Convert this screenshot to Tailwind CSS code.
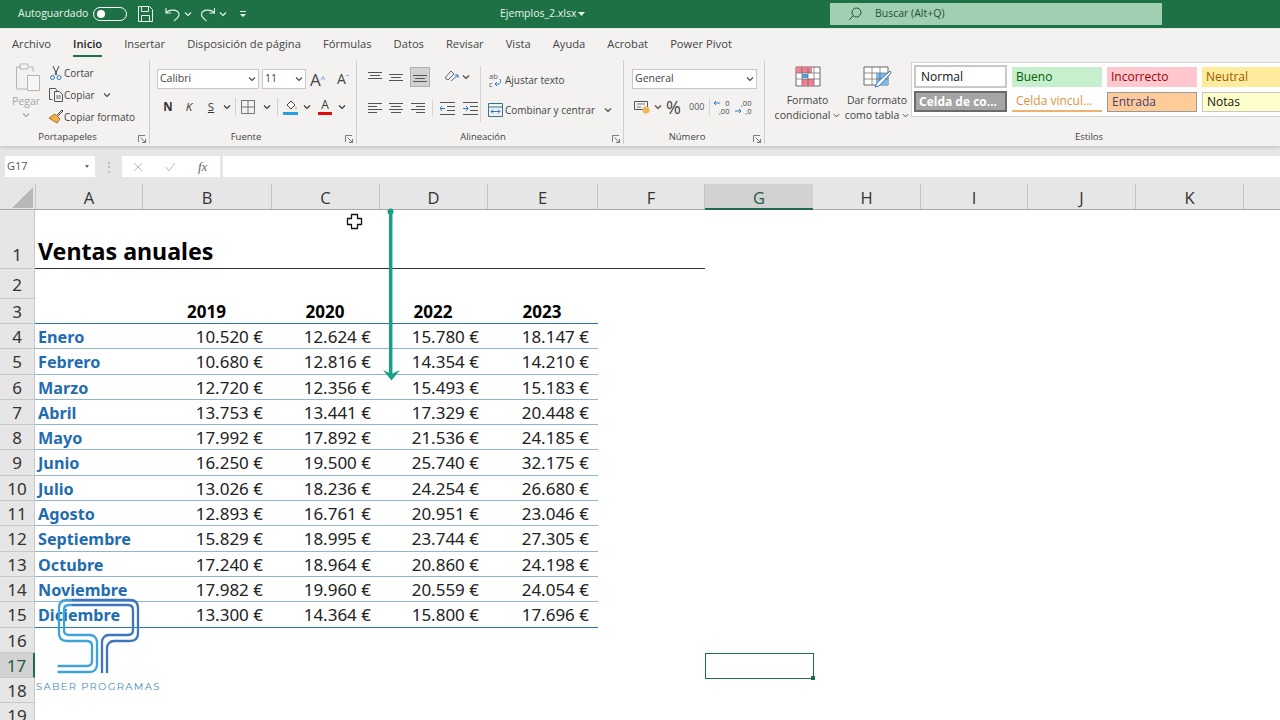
<!DOCTYPE html>
<html lang="es">
<head>
<meta charset="UTF-8">
<title>Ejemplos_2.xlsx - Excel</title>
<script src="https://cdn.jsdelivr.net/npm/@tailwindcss/browser@4"></script>
</head>
<body class="relative w-[1280px] h-[720px] overflow-hidden bg-white font-['Open_Sans',sans-serif] text-[#333]">

<svg class="hidden">
  <symbol id="chev" viewBox="0 0 8 8"><path d="M1 2.500l3 3 3-3" fill="none" stroke="currentColor" stroke-width="1.100"/></symbol>
  <symbol id="launch" viewBox="0 0 9 9"><path d="M.5 8V.5H8M8.500 8.500L3 3M8.500 4.500v4h-4" fill="none" stroke="#666" stroke-width="1"/></symbol>
</svg>

<!-- title bar -->
<header class="h-[29px] bg-[#1e7145] border-b border-[#dfe8e2] flex items-center text-[#e9f3ec] text-[10.500px]">
  <span class="ml-[18px] w-[75px]">Autoguardado</span>
  <span class="w-[34px] h-[14px] rounded-full border border-white flex items-center pl-[3px]"><span class="w-[8px] h-[8px] rounded-full bg-white"></span></span>
  <svg class="ml-[11px] w-[15px] h-[16px]" viewBox="0 0 15 16" fill="none" stroke="#e9f3ec" stroke-width="1"><path d="M.5.500h11l3 3v12H.5zM3.500.500v5h7v-5M3.500 15.500v-6h8v6"/></svg>
  <svg class="ml-[12px] w-[15px] h-[15px]" viewBox="0 0 15 15" fill="none" stroke="#e9f3ec" stroke-width="1.100"><path d="M1 1v5h5M1 6c3-4 12-4 13 1 .5 3-3 5-5 7"/></svg>
  <svg class="ml-[4px] w-[8px] h-[8px] text-[#e9f3ec]"><use href="#chev"/></svg>
  <svg class="ml-[8px] w-[16px] h-[15px]" viewBox="0 0 15 15" fill="none" stroke="#e9f3ec" stroke-width="1.100"><path d="M14 1v5H9M14 6C11 2 2 2 1 7c-.5 3 3 5 5 7"/></svg>
  <svg class="ml-[3px] w-[8px] h-[8px] text-[#e9f3ec]"><use href="#chev"/></svg>
  <svg class="ml-[12px] w-[8px] h-[8px]" viewBox="0 0 8 8" fill="#e9f3ec"><path d="M1 1h6v1H1zM1 4h6L4 7z"/></svg>
  <span class="ml-[253px] w-[78px] whitespace-nowrap">Ejemplos_2.xlsx</span>
  <svg class="w-[7px] h-[4px]" viewBox="0 0 7 4" fill="#e9f3ec"><path d="M0 0h7L3.500 4z"/></svg>
  <div class="ml-[245px] w-[332px] h-[22px] bg-[#a0cfb1] flex items-center text-[#1f4f36]">
    <svg class="ml-[18px] w-[14px] h-[14px]" viewBox="0 0 14 14" fill="none" stroke="#1f4f36" stroke-width="1"><circle cx="8.500" cy="5.500" r="4.500"/><path d="M5.500 8.500L1 13"/></svg>
    <span class="ml-[13px]">Buscar (Alt+Q)</span>
  </div>
</header>

<!-- tabs -->
<nav class="h-[29px] bg-[#f3f2f1] flex items-center gap-[22px] pl-[12px] pt-[2px] text-[11.200px] text-[#444]">
  <span>Archivo</span>
  <span class="relative font-semibold text-[#222]">Inicio<span class="absolute left-0 right-0 top-[19px] h-[2px] bg-[#1e7145]"></span></span>
  <span>Insertar</span><span>Disposición de página</span><span>Fórmulas</span><span>Datos</span><span>Revisar</span><span>Vista</span><span>Ayuda</span><span>Acrobat</span><span>Power Pivot</span>
</nav>

<!-- ribbon -->
<div class="h-[88px] bg-[#f3f2f1] flex text-[10px] text-[#444] shadow-[0_2px_3px_#c8c8c8] relative">

  <section class="w-[150px] flex flex-col border-r border-[#cfcfcf] my-[2px]">
    <div class="h-[70px] flex pt-[2px]">
      <div class="w-[48px] pl-[12px] flex flex-col text-[#a6a6a6] text-[10.500px]">
        <svg class="ml-[3px] w-[26px] h-[30px]" viewBox="0 0 26 30" fill="none" stroke="#b5b5b5"><path d="M6 5H1.500v22H12M18 10V5h-4M5 2h8v5H5z"/><path d="M12.500 13.500h12v15h-12z" fill="#f7f7f7"/></svg>
        <span class="mt-[2px]">Pegar</span>
        <svg class="ml-[10px] mt-[1px] w-[8px] h-[8px]"><use href="#chev"/></svg>
      </div>
      <div class="flex flex-col">
        <div class="h-[22px] flex items-center"><svg class="w-[16px] h-[16px]" viewBox="0 0 16 16" fill="none"><path d="M5 1l4 9M11 1L7 10" stroke="#444"/><circle cx="4.500" cy="12.500" r="2" stroke="#2b79c2"/><circle cx="11" cy="12.500" r="2" stroke="#2b79c2"/></svg><span>Cortar</span></div>
        <div class="h-[22px] flex items-center"><svg class="w-[16px] h-[16px]" viewBox="0 0 16 16" fill="none" stroke="#555"><path d="M4.500 12.500h-3V1.500h6l2 3M6.500 4.500h5l3 3v7h-8z"/><path d="M8 9h5M8 11h5" stroke="#777"/></svg><span>Copiar</span><svg class="ml-[8px] w-[8px] h-[8px]"><use href="#chev"/></svg></div>
        <div class="h-[22px] flex items-center"><svg class="w-[16px] h-[16px]" viewBox="0 0 16 16" fill="none"><path d="M1 9l6-4 5 5-3 4z" fill="#f1b04c" stroke="#a8701c"/><path d="M9 6l5-5 1 1-5 5" stroke="#444"/></svg><span>Copiar formato</span></div>
      </div>
    </div>
    <div class="flex-1 flex items-center justify-center relative pr-[14px] text-[9.500px]">Portapapeles<svg class="absolute right-[3px] top-[5px] w-[8px] h-[8px]"><use href="#launch"/></svg></div>
  </section>

  <section class="w-[207px] flex flex-col border-r border-[#cfcfcf] my-[2px]">
    <div class="h-[70px] pt-[9px] pl-[7px]">
      <div class="flex items-center h-[20px] gap-[3px] text-[10.500px]">
        <div class="w-[102px] h-[20px] bg-white border border-[#c8c8c8] flex items-center justify-between px-[2px]"><span>Calibri</span><svg class="w-[8px] h-[8px]"><use href="#chev"/></svg></div>
        <div class="w-[44px] h-[20px] bg-white border border-[#c8c8c8] flex items-center justify-between px-[2px]"><span>11</span><svg class="w-[8px] h-[8px]"><use href="#chev"/></svg></div>
        <span class="ml-[1px] text-[17px] leading-none w-[24px]">A<sup class="text-[8px] text-[#2b79c2]">^</sup></span>
        <span class="text-[14px] leading-none">A<sup class="text-[8px] text-[#2b79c2]">ˇ</sup></span>
      </div>
      <div class="flex items-center h-[20px] mt-[8px] text-[#333]">
        <b class="w-[22px] text-center text-[11.500px]">N</b>
        <i class="w-[20px] text-center text-[11.500px]">K</i>
        <u class="w-[24px] text-center text-[11.500px]">S</u>
        <svg class="w-[8px] h-[8px]"><use href="#chev"/></svg>
        <span class="ml-[4px] w-px h-[18px] bg-[#d0d0d0]"></span>
        <svg class="ml-[5px] w-[14px] h-[14px]" viewBox="0 0 14 14" fill="none" stroke="#777"><path d="M.5.500h13v13H.5zM7 .500v13M.5 7h13"/></svg>
        <svg class="ml-[8px] w-[8px] h-[8px]"><use href="#chev"/></svg>
        <span class="ml-[6px] w-px h-[18px] bg-[#d0d0d0]"></span>
        <svg class="ml-[5px] w-[15px] h-[16px]" viewBox="0 0 15 16"><path d="M4 6l4-4 4 4-4 4z" fill="#fff" stroke="#444"/><path d="M13 7l1 3h-2z" fill="#e8a33c"/><path d="M0 13h15v3H0z" fill="#25a0da"/></svg>
        <svg class="ml-[5px] w-[8px] h-[8px]"><use href="#chev"/></svg>
        <div class="ml-[7px] w-[14px] h-[16px] flex flex-col items-center leading-none text-[12px]">A<span class="mt-[1px] w-[14px] h-[3px] bg-[#e00d0d]"></span></div>
        <svg class="ml-[6px] w-[8px] h-[8px]"><use href="#chev"/></svg>
      </div>
    </div>
    <div class="flex-1 flex items-center justify-center relative pr-[14px] text-[9.500px]">Fuente<svg class="absolute right-[3px] top-[5px] w-[8px] h-[8px]"><use href="#launch"/></svg></div>
  </section>

  <section class="w-[267px] flex flex-col border-r border-[#cfcfcf] my-[2px]">
    <div class="h-[70px] flex pt-[6px]">
      <div class="w-[124px] border-r border-[#d5d5d5] h-[56px] pl-[11px]">
        <div class="flex items-center h-[21px] gap-[7px]">
          <svg class="w-[14px] h-[10px]" viewBox="0 0 14 10"><path d="M0 .500h14M2 3.500h10M0 6.500h14" stroke="#555"/></svg>
          <svg class="w-[14px] h-[10px]" viewBox="0 0 14 10"><path d="M0 2.500h14M2 5.500h10M0 8.500h14" stroke="#555"/></svg>
          <div class="w-[20px] h-[20px] bg-[#d2d2d2] border border-[#b0b0b0] flex items-center justify-center"><svg class="w-[14px] h-[10px]" viewBox="0 0 14 10"><path d="M0 3.500h14M2 6.500h10M0 9.500h14" stroke="#555"/></svg></div>
          <svg class="ml-[7px] w-[15px] h-[13px]" viewBox="0 0 15 13" fill="none" stroke="#666"><path d="M1 8l6-7 3 3-6 6z"/><path d="M7 11l7-6M14 8V5h-3" stroke="#2b79c2"/></svg>
          <svg class="ml-[-4px] w-[8px] h-[8px]"><use href="#chev"/></svg>
        </div>
        <div class="flex items-center h-[20px] mt-[11px] gap-[7px]">
          <svg class="w-[14px] h-[11px]" viewBox="0 0 14 11"><path d="M0 .500h14M0 3.500h9M0 6.500h14M0 9.500h9" stroke="#555"/></svg>
          <svg class="w-[14px] h-[11px]" viewBox="0 0 14 11"><path d="M0 .500h14M2 3.500h10M0 6.500h14M2 9.500h10" stroke="#555"/></svg>
          <svg class="ml-[1px] w-[14px] h-[11px]" viewBox="0 0 14 11"><path d="M0 .500h14M5 3.500h9M0 6.500h14M5 9.500h9" stroke="#555"/></svg>
          <span class="w-px h-[18px] bg-[#d5d5d5]"></span>
          <svg class="w-[15px] h-[13px]" viewBox="0 0 15 13"><path d="M0 .500h15M0 12.500h15M7 4.500h8M7 8.500h8" stroke="#555"/><path d="M5 6.500H0M2 4L0 6.500 2 9" stroke="#2b79c2" fill="none"/></svg>
          <svg class="ml-[1px] w-[15px] h-[13px]" viewBox="0 0 15 13"><path d="M0 .500h15M0 12.500h15M7 4.500h8M7 8.500h8" stroke="#555"/><path d="M0 6.500h5M3 4l2 2.500L3 9" stroke="#2b79c2" fill="none"/></svg>
        </div>
      </div>
      <div class="pl-[7px]">
        <div class="flex items-center h-[21px] mt-[4px]">
          <div class="ml-[1px] w-[15px] h-[17px] flex items-start">
            <span class="text-[7.500px] leading-[8px] text-[#555]">ab<br>c</span>
            <svg class="ml-[-5px] mt-[7px] w-[9px] h-[9px] shrink-0" viewBox="0 0 9 9" fill="none"><path d="M7 0c2 4-1 6-5 5M4 3L2 5l2 2" stroke="#2b79c2"/></svg>
          </div>
          <span class="ml-[1px]">Ajustar texto</span>
        </div>
        <div class="flex items-center h-[20px] mt-[9px]"><svg class="w-[15px] h-[14px]" viewBox="0 0 15 14" fill="none"><path d="M.5.500h14v13H.5z" stroke="#2c7a8c"/><path d="M1 4h13" stroke="#2c7a8c"/><path d="M3 8.500h9M5 6.500l-2 2 2 2M10 6.500l2 2-2 2" stroke="#2b79c2"/></svg><span class="ml-[2px]">Combinar y centrar</span><svg class="ml-[9px] w-[8px] h-[8px]"><use href="#chev"/></svg></div>
      </div>
    </div>
    <div class="flex-1 flex items-center justify-center relative pr-[14px] text-[9.500px]">Alineación<svg class="absolute right-[3px] top-[5px] w-[8px] h-[8px]"><use href="#launch"/></svg></div>
  </section>

  <section class="w-[141px] flex flex-col border-r border-[#cfcfcf] my-[2px]">
    <div class="h-[70px] pt-[9px] pl-[8px]">
      <div class="w-[125px] h-[20px] bg-white border border-[#c8c8c8] flex items-center justify-between px-[2px] text-[10.500px]"><span>General</span><svg class="w-[8px] h-[8px]"><use href="#chev"/></svg></div>
      <div class="flex items-center h-[20px] mt-[8px]">
        <svg class="ml-[2px] w-[16px] h-[14px]" viewBox="0 0 16 14" fill="none"><path d="M.5 1.500h13v8H.5z" stroke="#555"/><path d="M3 4h8M3 7h4" stroke="#777"/><ellipse cx="12" cy="10" rx="3.500" ry="3.500" fill="#efb556"/></svg>
        <svg class="ml-[4px] w-[8px] h-[8px]"><use href="#chev"/></svg>
        <span class="ml-[4px] text-[18px] leading-none w-[18px]">%</span>
        <span class="ml-[5px] text-[9px] text-[#555]">000</span>
        <span class="ml-[5px] w-px h-[18px] bg-[#d5d5d5]"></span>
        <div class="ml-[3px] w-[16px] text-[7.500px] leading-[8px] text-right flex flex-col">
          <span class="flex justify-between items-center"><svg class="w-[7px] h-[6px]" viewBox="0 0 7 6" fill="none"><path d="M7 3H1M3 1L1 3l2 2" stroke="#2b79c2"/></svg>0</span>
          <span>,00</span>
        </div>
        <div class="ml-[6px] w-[16px] text-[7.500px] leading-[8px] text-right flex flex-col">
          <span>,00</span>
          <span class="flex justify-between items-center"><svg class="w-[7px] h-[6px]" viewBox="0 0 7 6" fill="none"><path d="M0 3h6M4 1l2 2-2 2" stroke="#2b79c2"/></svg>,0</span>
        </div>
      </div>
    </div>
    <div class="flex-1 flex items-center justify-center relative pr-[14px] text-[9.500px]">Número<svg class="absolute right-[3px] top-[5px] w-[8px] h-[8px]"><use href="#launch"/></svg></div>
  </section>

  <section class="w-[515px] flex flex-col my-[2px]">
    <div class="h-[70px] flex text-[10.500px]">
      <div class="w-[83px] flex flex-col items-center pt-[6px] leading-[15px] ml-[1px]">
        <svg class="w-[26px] h-[21px]" viewBox="0 0 26 21"><path d="M1 1h24v19H1z" fill="#fff" stroke="#666"/><path d="M1 1h16v6H1zM7 13h12v7H7z" fill="#ee7f90"/><path d="M7 8h6v4H7z" fill="#4f9fdf"/><path d="M1 7h24M1 13h24M7 1v19M13 1v19M19 1v19" stroke="#666" stroke-width=".7"/></svg>
        <span class="mt-[6px]">Formato</span>
        <span class="flex items-center">condicional<svg class="ml-[3px] w-[7px] h-[7px]"><use href="#chev"/></svg></span>
      </div>
      <div class="w-[56px] flex flex-col items-center pt-[6px] leading-[15px]">
        <svg class="w-[29px] h-[23px] shrink-0" viewBox="0 0 29 23"><path d="M1 1h24v18H1z" fill="#fff" stroke="#666"/><path d="M13 7h12v12H13z" fill="#7cb8e8"/><path d="M1 7h24M1 13h24M9 1v18M17 1v18" stroke="#666" stroke-width=".7"/><path d="M27 5L14 17l-2 4 4-1L28 7z" fill="#fff" stroke="#3a7fc0"/></svg>
        <span class="mt-[4px] whitespace-nowrap">Dar formato</span>
        <span class="flex items-center whitespace-nowrap">como tabla<svg class="ml-[3px] w-[7px] h-[7px]"><use href="#chev"/></svg></span>
      </div>
      <div class="ml-[6px] mt-[2px] h-[55px] flex-1 bg-white border border-[#d4d4d4] border-r-0 text-[12px] overflow-hidden pl-[2px]">
        <div class="grid grid-cols-[93px_90px_90px_90px] gap-x-[5px] items-center pt-[2px]">
          <div class="h-[23px] border-2 border-[#c8c8c8] flex items-center pl-[5px] text-[#111]">Normal</div>
          <div class="h-[20px] bg-[#c6efce] flex items-center pl-[4px] text-[#006100]">Bueno</div>
          <div class="h-[20px] bg-[#ffc7ce] flex items-center pl-[4px] text-[#9c0006]">Incorrecto</div>
          <div class="h-[20px] bg-[#ffeb9c] flex items-center pl-[4px] text-[#9c5700]">Neutral</div>
        </div>
        <div class="grid grid-cols-[93px_90px_90px_90px] gap-x-[5px] items-center mt-[3px]">
          <div class="h-[21px] bg-[#a5a5a5] border-2 border-[#6a6a6a] flex items-center pl-[3px] text-white font-bold whitespace-nowrap">Celda de co...</div>
          <div class="h-[20px] border-b-2 border-[#f0b070] flex items-center pl-[4px] text-[#e0913a] whitespace-nowrap">Celda vincul...</div>
          <div class="h-[20px] bg-[#ffcc99] border border-[#9a9a9a] flex items-center pl-[4px] text-[#3f3f76]">Entrada</div>
          <div class="h-[20px] bg-[#ffffcc] border border-[#c8c8c8] flex items-center pl-[4px] text-[#111]">Notas</div>
        </div>
      </div>
    </div>
    <div class="flex-1 flex items-center justify-center pr-[17px] pl-[150px] text-[9.500px]">Estilos</div>
  </section>
</div>

<!-- formula bar -->
<div class="h-[38px] bg-[#e6e6e6] flex items-end pb-[7px] pl-[5px] text-[#555] text-[11px]">
  <div class="w-[90px] h-[21px] bg-white flex items-center justify-between pl-[2px] pr-[6px]"><span>G17</span><svg class="w-[4px] h-[3px]" viewBox="0 0 4 3" fill="#666"><path d="M0 0h4L2 3z"/></svg></div>
  <div class="w-[27px] h-[21px] flex items-center justify-center text-[#aaa] leading-none text-[12px]">⋮</div>
  <div class="w-[98px] h-[21px] bg-white flex items-center text-[#b5b5b5]">
    <svg class="ml-[11px] w-[10px] h-[10px]" viewBox="0 0 10 10"><path d="M1 1l8 8M9 1L1 9" stroke="#bbb"/></svg>
    <svg class="ml-[22px] w-[11px] h-[10px]" viewBox="0 0 11 10" fill="none"><path d="M1 5l3 4 6-8" stroke="#bbb"/></svg>
    <span class="ml-[22px] font-['Liberation_Serif',serif] italic text-[13px] text-[#666]">fx</span>
  </div>
  <div class="ml-[3px] flex-1 h-[21px] bg-white"></div>
</div>

<!-- column headers -->
<div class="h-[26px] bg-[#e6e6e6] border-b border-[#a8a8a8] flex text-[16.500px] text-[#333] leading-[28px] text-center">
  <div class="w-[36px] relative border-r border-[#c4c4c4]"><span class="absolute right-[2px] bottom-[1px] border-[8px] border-transparent border-r-[#b8b8b8] border-b-[#b8b8b8] scale-[1.300] origin-bottom-right"></span></div>
  <div class="w-[107px] border-r border-[#c4c4c4]">A</div>
  <div class="w-[129px] border-r border-[#c4c4c4]">B</div>
  <div class="w-[108px] border-r border-[#c4c4c4]">C</div>
  <div class="w-[108px] border-r border-[#c4c4c4]">D</div>
  <div class="w-[110px] border-r border-[#c4c4c4]">E</div>
  <div class="w-[107px] border-r border-[#c4c4c4]">F</div>
  <div class="w-[108px] h-[26px] bg-[#d2d2d2] border-b-2 border-[#1f6b4a] text-[#1f5c44]">G</div>
  <div class="w-[108px] border-r border-[#c4c4c4]">H</div>
  <div class="w-[107px] border-r border-[#c4c4c4]">I</div>
  <div class="w-[108px] border-r border-[#c4c4c4]">J</div>
  <div class="w-[108px] border-r border-[#c4c4c4]">K</div>
  <div class="flex-1"></div>
</div>

<!-- sheet -->
<main class="font-['Noto_Sans',sans-serif] text-[17px] leading-[26px] text-[#222] [&>div]:flex [&_b]:text-[16.200px]">
  <div class="h-[59px]">
    <div class="w-[35px] bg-[#e6e6e6] border-r border-b border-[#c8c8c8] flex items-end justify-center text-[#333]">1</div>
    <div class="w-[670px] border-b border-[#333] flex items-end pl-[3px] text-[23.200px] font-bold text-black leading-[34px]">Ventas anuales</div>
  </div>
  <div class="h-[29.700px]">
    <div class="w-[35px] bg-[#e6e6e6] border-r border-b border-[#c8c8c8] flex items-end justify-center text-[#333]">2</div>
  </div>
  <div class="h-[25.300px]">
    <div class="w-[35px] bg-[#e6e6e6] border-r border-b border-[#c8c8c8] text-center text-[#333]">3</div>
    <div class="w-[563px] border-b border-[#2e75b6] grid grid-cols-[107px_129px_108px_108px_110px] text-center font-bold text-black"><span></span><span>2019</span><span>2020</span><span>2022</span><span>2023</span></div>
  </div>
  <div class="h-[25.300px]">
    <div class="w-[35px] bg-[#e6e6e6] border-r border-b border-[#c8c8c8] text-center text-[#333]">4</div>
    <div class="w-[563px] border-b border-[#8fb6cf] grid grid-cols-[107px_129px_108px_108px_110px] text-right [&>span]:pr-[8px]"><b class="pl-[3px] text-left text-[#1f6cb0]">Enero</b><span>10.520 €</span><span>12.624 €</span><span>15.780 €</span><span>18.147 €</span></div>
  </div>
  <div class="h-[25.300px]">
    <div class="w-[35px] bg-[#e6e6e6] border-r border-b border-[#c8c8c8] text-center text-[#333]">5</div>
    <div class="w-[563px] border-b border-[#8fb6cf] grid grid-cols-[107px_129px_108px_108px_110px] text-right [&>span]:pr-[8px]"><b class="pl-[3px] text-left text-[#1f6cb0]">Febrero</b><span>10.680 €</span><span>12.816 €</span><span>14.354 €</span><span>14.210 €</span></div>
  </div>
  <div class="h-[25.300px]">
    <div class="w-[35px] bg-[#e6e6e6] border-r border-b border-[#c8c8c8] text-center text-[#333]">6</div>
    <div class="w-[563px] border-b border-[#8fb6cf] grid grid-cols-[107px_129px_108px_108px_110px] text-right [&>span]:pr-[8px]"><b class="pl-[3px] text-left text-[#1f6cb0]">Marzo</b><span>12.720 €</span><span>12.356 €</span><span>15.493 €</span><span>15.183 €</span></div>
  </div>
  <div class="h-[25.300px]">
    <div class="w-[35px] bg-[#e6e6e6] border-r border-b border-[#c8c8c8] text-center text-[#333]">7</div>
    <div class="w-[563px] border-b border-[#8fb6cf] grid grid-cols-[107px_129px_108px_108px_110px] text-right [&>span]:pr-[8px]"><b class="pl-[3px] text-left text-[#1f6cb0]">Abril</b><span>13.753 €</span><span>13.441 €</span><span>17.329 €</span><span>20.448 €</span></div>
  </div>
  <div class="h-[25.300px]">
    <div class="w-[35px] bg-[#e6e6e6] border-r border-b border-[#c8c8c8] text-center text-[#333]">8</div>
    <div class="w-[563px] border-b border-[#8fb6cf] grid grid-cols-[107px_129px_108px_108px_110px] text-right [&>span]:pr-[8px]"><b class="pl-[3px] text-left text-[#1f6cb0]">Mayo</b><span>17.992 €</span><span>17.892 €</span><span>21.536 €</span><span>24.185 €</span></div>
  </div>
  <div class="h-[25.300px]">
    <div class="w-[35px] bg-[#e6e6e6] border-r border-b border-[#c8c8c8] text-center text-[#333]">9</div>
    <div class="w-[563px] border-b border-[#8fb6cf] grid grid-cols-[107px_129px_108px_108px_110px] text-right [&>span]:pr-[8px]"><b class="pl-[3px] text-left text-[#1f6cb0]">Junio</b><span>16.250 €</span><span>19.500 €</span><span>25.740 €</span><span>32.175 €</span></div>
  </div>
  <div class="h-[25.300px]">
    <div class="w-[35px] bg-[#e6e6e6] border-r border-b border-[#c8c8c8] text-center text-[#333]">10</div>
    <div class="w-[563px] border-b border-[#8fb6cf] grid grid-cols-[107px_129px_108px_108px_110px] text-right [&>span]:pr-[8px]"><b class="pl-[3px] text-left text-[#1f6cb0]">Julio</b><span>13.026 €</span><span>18.236 €</span><span>24.254 €</span><span>26.680 €</span></div>
  </div>
  <div class="h-[25.300px]">
    <div class="w-[35px] bg-[#e6e6e6] border-r border-b border-[#c8c8c8] text-center text-[#333]">11</div>
    <div class="w-[563px] border-b border-[#8fb6cf] grid grid-cols-[107px_129px_108px_108px_110px] text-right [&>span]:pr-[8px]"><b class="pl-[3px] text-left text-[#1f6cb0]">Agosto</b><span>12.893 €</span><span>16.761 €</span><span>20.951 €</span><span>23.046 €</span></div>
  </div>
  <div class="h-[25.300px]">
    <div class="w-[35px] bg-[#e6e6e6] border-r border-b border-[#c8c8c8] text-center text-[#333]">12</div>
    <div class="w-[563px] border-b border-[#8fb6cf] grid grid-cols-[107px_129px_108px_108px_110px] text-right [&>span]:pr-[8px]"><b class="pl-[3px] text-left text-[#1f6cb0]">Septiembre</b><span>15.829 €</span><span>18.995 €</span><span>23.744 €</span><span>27.305 €</span></div>
  </div>
  <div class="h-[25.300px]">
    <div class="w-[35px] bg-[#e6e6e6] border-r border-b border-[#c8c8c8] text-center text-[#333]">13</div>
    <div class="w-[563px] border-b border-[#8fb6cf] grid grid-cols-[107px_129px_108px_108px_110px] text-right [&>span]:pr-[8px]"><b class="pl-[3px] text-left text-[#1f6cb0]">Octubre</b><span>17.240 €</span><span>18.964 €</span><span>20.860 €</span><span>24.198 €</span></div>
  </div>
  <div class="h-[25.300px]">
    <div class="w-[35px] bg-[#e6e6e6] border-r border-b border-[#c8c8c8] text-center text-[#333]">14</div>
    <div class="w-[563px] border-b border-[#8fb6cf] grid grid-cols-[107px_129px_108px_108px_110px] text-right [&>span]:pr-[8px]"><b class="pl-[3px] text-left text-[#1f6cb0]">Noviembre</b><span>17.982 €</span><span>19.960 €</span><span>20.559 €</span><span>24.054 €</span></div>
  </div>
  <div class="h-[25.300px]">
    <div class="w-[35px] bg-[#e6e6e6] border-r border-b border-[#c8c8c8] text-center text-[#333]">15</div>
    <div class="w-[563px] border-b border-[#2e75b6] grid grid-cols-[107px_129px_108px_108px_110px] text-right [&>span]:pr-[8px]"><b class="pl-[3px] text-left text-[#1f6cb0]">Diciembre</b><span>13.300 €</span><span>14.364 €</span><span>15.800 €</span><span>17.696 €</span></div>
  </div>
  <div class="h-[25.300px]"><div class="w-[35px] bg-[#e6e6e6] border-r border-b border-[#c8c8c8] text-center text-[#333]">16</div></div>
  <div class="h-[25.300px]"><div class="w-[35px] bg-[#d2d2d2] border-r-2 border-b border-r-[#1f6b4a] border-b-[#c8c8c8] text-center text-[#1f5c44]">17</div></div>
  <div class="h-[25.300px]"><div class="w-[35px] bg-[#e6e6e6] border-r border-b border-[#c8c8c8] text-center text-[#333]">18</div></div>
  <div class="h-[25.300px]"><div class="w-[35px] bg-[#e6e6e6] border-r border-[#c8c8c8] text-center text-[#333]">19</div></div>
</main>

<!-- selected cell G17 -->
<div class="absolute left-[705px] top-[653px] w-[109px] h-[26px] border border-[#1f6b4a]"><span class="absolute right-[-2px] bottom-[-2px] w-[4px] h-[4px] bg-[#1f6b4a]"></span></div>

<!-- teal arrow and cursor drawn over the sheet -->
<svg class="absolute left-[380px] top-[205px] w-[24px] h-[180px]" viewBox="0 0 24 180"><circle cx="10.500" cy="6.500" r="3" fill="#17a085"/><path d="M10.700 6v165" stroke="#17a085" stroke-width="3.500"/><path d="M3 165l8.500 4 8.500-4-8.500 10.500z" fill="#17a085"/></svg>
<svg class="absolute left-[346px] top-[213px] w-[17px] h-[17px]" viewBox="0 0 17 17"><path d="M5.500 1.500h6v4h4v6h-4v4h-6v-4h-4v-6h4z" fill="#fff" stroke="#111" stroke-width="1.300" stroke-linejoin="round"/></svg>

<!-- logo -->
<svg class="absolute left-[50px] top-[595px] w-[95px] h-[82px]" viewBox="50 595 95 82" fill="none" stroke-width="2.300">
  <path d="M72 600h-5c-5 0-8 3-8 8v25c0 5 3 8 8 8h20c3 0 5 2 5 5v15c0 3-2 5-5 5H57.500" stroke="#3ea3d8"/>
  <path d="M72 605h-3c-3 0-5 2-5 5v20c0 3 2 5 5 5h21c4 0 7 3 7 7v23c0 4-3 7-7 7H57.500" stroke="#3ea3d8"/>
  <path d="M72 600h58c5 0 8 3 8 8v25c0 5-3 8-8 8h-16c-4 0-7 3-7 7v25" stroke="#3c74bd"/>
  <path d="M72 605h56c3 0 5 2 5 5v20c0 3-2 5-5 5h-19c-4 0-7 3-7 7v31" stroke="#3c74bd"/>
</svg>
<span class="absolute left-[36px] top-[680px] text-[10px] tracking-[1.300px] leading-[14px] font-['Montserrat','Open_Sans',sans-serif] text-[#4a8db8]">SABER PROGRAMAS</span>

</body>
</html>
